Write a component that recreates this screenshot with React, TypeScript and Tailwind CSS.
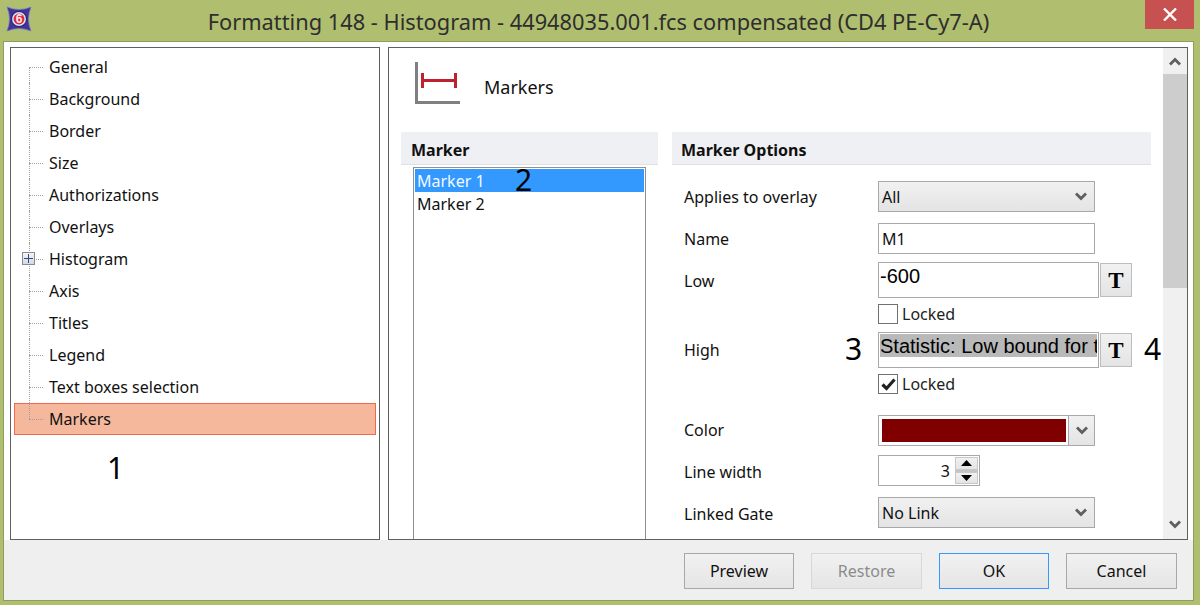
import React from "react";

const ui = "font-['Noto_Sans','Open_Sans',sans-serif]";

function Chevron({ up = false, className = "" }: { up?: boolean; className?: string }) {
  return (
    <svg width="12" height="9" viewBox="0 0 12 9" className={className}>
      <path d={up ? "M1 7.5 L6 2.5 L11 7.5" : "M1 1.5 L6 6.5 L11 1.5"} fill="none" stroke="#5f5f5f" strokeWidth="2.8" />
    </svg>
  );
}

function Select({ value }: { value: string }) {
  return (
    <div className="w-[217px] h-[31px] border border-[#a8a8a8] bg-gradient-to-b from-[#f1f1f1] to-[#e4e4e4] flex items-center justify-between pl-[3px] pr-[7px] text-[16px] text-[#111]">
      <span>{value}</span>
      <Chevron />
    </div>
  );
}

function TButton() {
  return (
    <div className="w-[32px] h-[34px] ml-[1px] border border-[#bdbdbd] bg-gradient-to-b from-[#f1f1f1] to-[#e4e4e4] flex items-center justify-center font-['Liberation_Serif',serif] font-bold text-[23px] text-black leading-none">
      T
    </div>
  );
}

function Locked({ checked = false }: { checked?: boolean }) {
  return (
    <div className="flex items-center h-[20px] ml-[194px] gap-[4px] text-[16px] text-[#222]">
      <div className="w-[20px] h-[20px] border border-[#707070] bg-white flex items-center justify-center">
        {checked && (
          <svg width="15" height="13" viewBox="0 0 15 13">
            <path d="M1.5 6.5 L5.5 10.5 L13.5 1.5" fill="none" stroke="#222" strokeWidth="3.2" />
          </svg>
        )}
      </div>
      <span>Locked</span>
    </div>
  );
}

function Row({ label, mt, drop = "", children }: { label: string; mt: string; drop?: string; children: React.ReactNode }) {
  return (
    <div className={`flex items-center ${mt}`}>
      <div className={`w-[194px] text-[16px] text-[#111] ${drop}`}>{label}</div>
      {children}
    </div>
  );
}

const tree = ["General", "Background", "Border", "Size", "Authorizations", "Overlays", "Histogram", "Axis", "Titles", "Legend", "Text boxes selection", "Markers"];

function Tree() {
  return (
    <div className="px-[3px] pt-[3px]">
      {tree.map((t, i) => {
        const last = t === "Markers";
        return (
          <div key={t} className={`relative h-[32px] flex items-center pl-[35px] text-[16px] text-[#111] ${last ? "bg-[#f5b89d] outline outline-1 outline-offset-[-1px] outline-[#f0694a]" : ""}`}>
            <span className={`absolute left-[15px] w-0 border-l border-dotted border-[#a0a0a0] ${i === 0 ? "top-[16px] h-[16px]" : last ? "top-0 h-[16px]" : "top-0 h-[32px]"}`} />
            <span className="absolute left-[15px] top-[16px] w-[14px] h-0 border-t border-dotted border-[#a0a0a0]" />
            {t === "Histogram" && (
              <span className="absolute left-[8px] top-[9px] w-[13px] h-[13px] border border-[#8a8a8a] bg-gradient-to-b from-[#f4f4f4] to-[#d5d9e2] flex items-center justify-center">
                <svg width="9" height="9" viewBox="0 0 9 9">
                  <path d="M0 4.5 H9 M4.5 0 V9" stroke="#2f4a8c" strokeWidth="1" />
                </svg>
              </span>
            )}
            <span className="relative">{t}</span>
          </div>
        );
      })}
    </div>
  );
}

function FootButton({ label, w, kind = "" }: { label: string; w: string; kind?: string }) {
  const look =
    kind === "off"
      ? "border-[#d8d8d8] text-[#8c8c8c]"
      : kind === "ok"
        ? "border-[#3399ff] text-[#111]"
        : "border-[#a8a8a8] text-[#111]";
  return (
    <div className={`${w} h-[36px] border ${look} bg-gradient-to-b from-[#f1f1f1] to-[#e5e5e5] flex items-center justify-center text-[16px]`}>
      {label}
    </div>
  );
}

export default function App() {
  return (
    <div className={`relative w-[1200px] h-[605px] overflow-hidden bg-[#b0bf6f] flex flex-col ${ui}`}>
      <div className="h-[41px] shrink-0 relative flex items-start justify-center pr-[3px]">
        <svg width="26" height="26" viewBox="0 0 26 26" className="absolute left-[6px] top-[6px]">
          <path d="M1 1 Q13 6 25 1 Q20 13 25 25 Q13 20 1 25 Q6 13 1 1 Z" fill="#47309a" stroke="#6f7fc0" strokeWidth="0.8" />
          <circle cx="13" cy="13" r="8" fill="#1f2a6e" />
          <circle cx="13" cy="13" r="7" fill="#cfe0f7" />
          <circle cx="13" cy="13" r="5.4" fill="#e3243c" />
          <text x="13" y="17.4" textAnchor="middle" fontSize="12" fontWeight="700" fill="#ffe9ec" fontFamily="Liberation Sans">6</text>
        </svg>
        <div className="mt-[7px] text-[21.8px] leading-[29px] text-[#2e2e2e] whitespace-nowrap">Formatting 148 - Histogram - 44948035.001.fcs compensated (CD4 PE-Cy7-A)</div>
        <div className="absolute right-[6px] top-0 w-[49px] h-[29px] bg-[#c75050] flex items-center justify-center">
          <svg width="14" height="13" viewBox="0 0 14 13">
            <path d="M1 0.5 L13 12.5 M13 0.5 L1 12.5" stroke="#fff" strokeWidth="2.4" />
          </svg>
        </div>
      </div>

      <div className="ml-[3px] mr-[6px] mb-[4px] flex-1 min-h-0 border border-[#8f9d5c] bg-[#efefef] flex flex-col">
        <div className="h-[498px] shrink-0 bg-white flex items-stretch pl-[6px] pr-[5px] pt-[5px] gap-[8px]">
          <div className="w-[370px] border border-[#5f5f5f] bg-white">
            <Tree />
          </div>
          <div className="flex-1 min-w-0 border border-[#5f5f5f] bg-white flex overflow-hidden">
            <div className="flex-1 min-w-0 overflow-hidden">
              <div className="h-[84px] flex items-start">
                <svg width="45" height="42" viewBox="0 0 45 42" className="ml-[26px] mt-[14px]">
                  <path d="M1.5 0 V40.5 H45" fill="none" stroke="#808080" strokeWidth="3" />
                  <path d="M7 18.5 H42 M7.5 11 V26 M40.5 11 V26" fill="none" stroke="#c0212e" strokeWidth="3" />
                </svg>
                <div className="ml-[24px] mt-[26px] text-[18px] leading-[26px] text-[#111]">Markers</div>
              </div>
              <div className="flex pl-[12px] gap-[14px]">
                <div className="w-[257px] shrink-0">
                  <div className="h-[33px] bg-[#eff0f3] border-b border-[#dfe0e4] flex items-center pl-[10px] pt-[3px] font-bold text-[16px] text-[#111]">Marker</div>
                  <div className="mt-[2px] ml-[12px] w-[233px] h-[400px] border border-[#8f8f8f] p-[1px] text-[16px] text-[#111]">
                    <div className="h-[23px] bg-[#3399ff] text-[#f2f8ff] flex items-center pl-[2px]">Marker 1</div>
                    <div className="h-[23px] flex items-center pl-[2px]">Marker 2</div>
                  </div>
                </div>
                <div className="w-[479px] shrink-0">
                  <div className="h-[33px] bg-[#eff0f3] border-b border-[#dfe0e4] flex items-center pl-[9px] pt-[3px] font-bold text-[16px] text-[#111]">Marker Options</div>
                  <div className="pl-[12px] pt-[16px] flex flex-col">
                    <Row label="Applies to overlay" mt="mt-0"><Select value="All" /></Row>
                    <Row label="Name" mt="mt-[11px]">
                      <div className="w-[217px] h-[31px] border border-[#a8a8a8] bg-white flex items-center pl-[3px] text-[16px] text-[#111]">M1</div>
                    </Row>
                    <Row label="Low" mt="mt-[8px]" drop="pt-[2px]">
                      <div className="w-[221px] h-[36px] border border-[#a8a8a8] bg-white pl-[1px] font-['Liberation_Sans',sans-serif] text-[20px] leading-[26px] text-black">-600</div>
                      <TButton />
                    </Row>
                    <div className="mt-[6px]"><Locked /></div>
                    <Row label="High" mt="mt-[8px]">
                      <div className="w-[221px] h-[36px] border border-[#a8a8a8] bg-white pl-[1px] pt-[1px] overflow-hidden">
                        <div className="h-[23px] w-[217px] bg-[#b9b9b9] overflow-hidden whitespace-nowrap font-['Liberation_Sans',sans-serif] text-[20px] leading-[25px] text-black">Statistic: Low bound for t</div>
                      </div>
                      <TButton />
                    </Row>
                    <div className="mt-[6px]"><Locked checked /></div>
                    <Row label="Color" mt="mt-[21px]" drop="pb-[2px]">
                      <div className="w-[217px] h-[31px] border border-[#a8a8a8] bg-white flex items-stretch">
                        <div className="flex-1 pl-[3px] py-[3px] pr-[2px]"><div className="h-full bg-[#800000]" /></div>
                        <div className="w-[26px] border-l border-[#a8a8a8] bg-gradient-to-b from-[#f1f1f1] to-[#e4e4e4] flex items-center justify-center"><Chevron /></div>
                      </div>
                    </Row>
                    <Row label="Line width" mt="mt-[9px]" drop="pt-[2px]">
                      <div className="w-[102px] h-[31px] border border-[#a8a8a8] bg-white flex items-center justify-end pr-[1px] text-[16px] text-[#111]">
                        <span className="mr-[5px]">3</span>
                        <div className="w-[23px] h-[27px] flex flex-col gap-[2px] bg-[#c4c4c4]">
                          <div className="flex-1 border border-[#c8c8c8] bg-gradient-to-b from-[#f1f1f1] to-[#e4e4e4] flex items-center justify-center">
                            <svg width="11" height="6" viewBox="0 0 11 6"><path d="M0 6 L5.5 0 L11 6 Z" fill="#000" /></svg>
                          </div>
                          <div className="flex-1 border border-[#c8c8c8] bg-gradient-to-b from-[#f1f1f1] to-[#e4e4e4] flex items-center justify-center">
                            <svg width="11" height="6" viewBox="0 0 11 6"><path d="M0 0 L5.5 6 L11 0 Z" fill="#000" /></svg>
                          </div>
                        </div>
                      </div>
                    </Row>
                    <Row label="Linked Gate" mt="mt-[11px]" drop="pt-[2px]"><Select value="No Link" /></Row>
                  </div>
                </div>
              </div>
            </div>
            <div className="w-[24px] shrink-0 bg-[#f0f0f0] flex flex-col">
              <div className="h-[26px] flex items-center justify-center"><Chevron up /></div>
              <div className="h-[214px] bg-[#cdcdcd]" />
              <div className="flex-1 flex items-end justify-center pb-[10px]"><Chevron /></div>
            </div>
          </div>
        </div>
        <div className="flex-1 flex items-start justify-end pt-[13px] pr-[16px] gap-[17px]">
          <FootButton label="Preview" w="w-[110px]" />
          <FootButton label="Restore" w="w-[111px]" kind="off" />
          <FootButton label="OK" w="w-[110px]" kind="ok" />
          <FootButton label="Cancel" w="w-[111px]" />
        </div>
      </div>

      <span className="absolute left-[107px] top-[448px] text-[30px] leading-[40px] text-black">1</span>
      <span className="absolute left-[515px] top-[160px] text-[30px] leading-[40px] text-black">2</span>
      <span className="absolute left-[845px] top-[329px] text-[30px] leading-[40px] text-black">3</span>
      <span className="absolute left-[1144px] top-[329px] text-[30px] leading-[40px] text-black">4</span>
    </div>
  );
}
